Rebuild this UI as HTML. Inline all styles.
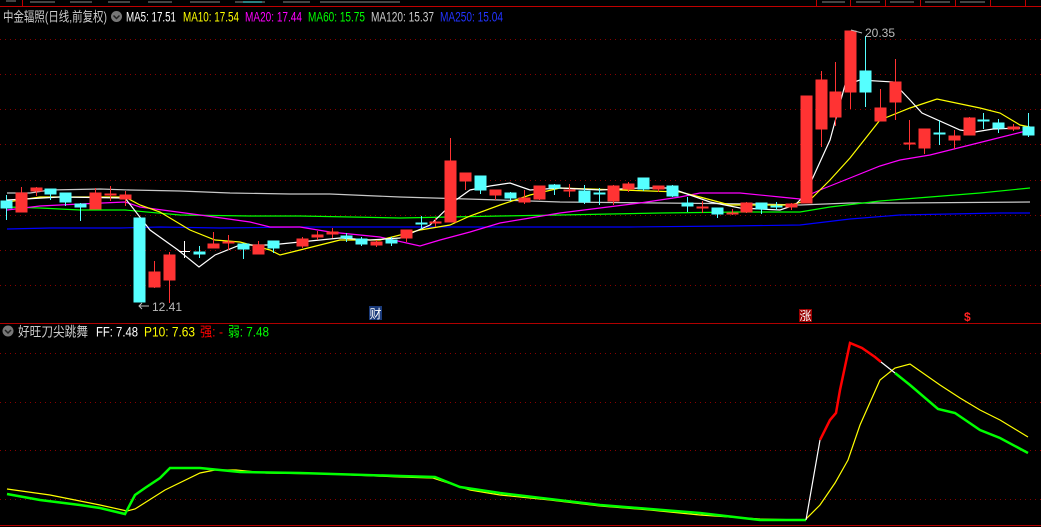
<!DOCTYPE html>
<html><head><meta charset="utf-8"><style>
body{margin:0;background:#000;width:1041px;height:527px;overflow:hidden;font-family:"Liberation Sans","Noto Sans CJK SC",sans-serif}
svg{display:block}
</style></head><body>
<svg width="1041" height="527" xmlns="http://www.w3.org/2000/svg" font-family="Liberation Sans, Noto Sans CJK SC, sans-serif">
<rect width="1041" height="527" fill="#000"/>
<line x1="0" y1="6.5" x2="1041" y2="6.5" stroke="#c00000"/>
<line x1="22.5" y1="0" x2="22.5" y2="6" stroke="#c00000"/>
<line x1="6" y1="1" x2="16" y2="1" stroke="#888"/>
<g stroke="#c00000"><line x1="816.5" y1="0" x2="816.5" y2="6"/><line x1="850.5" y1="0" x2="850.5" y2="6"/><line x1="885.5" y1="0" x2="885.5" y2="6"/><line x1="920.5" y1="0" x2="920.5" y2="6"/><line x1="955.5" y1="0" x2="955.5" y2="6"/><line x1="990.5" y1="0" x2="990.5" y2="6"/><line x1="1025.5" y1="0" x2="1025.5" y2="6"/></g>
<g stroke="#888" stroke-width="1"><line x1="30" y1="2" x2="55" y2="2"/><line x1="70" y1="2" x2="92" y2="2"/><line x1="108" y1="2" x2="130" y2="2"/><line x1="148" y1="2" x2="172" y2="2"/><line x1="190" y1="2" x2="220" y2="2"/><line x1="235" y1="2" x2="265" y2="2"/><line x1="283" y1="2" x2="310" y2="2"/><line x1="320" y1="2" x2="400" y2="2"/><line x1="822" y1="2" x2="845" y2="2"/><line x1="856" y1="2" x2="880" y2="2"/><line x1="890" y1="2" x2="914" y2="2"/><line x1="925" y1="2" x2="950" y2="2"/><line x1="960" y1="2" x2="985" y2="2"/></g>
<line x1="243" y1="2" x2="262" y2="2" stroke="#5ff"/>
<g stroke="#8a0000" stroke-dasharray="1,4">
<line x1="0" y1="39.5" x2="1041" y2="39.5"/><line x1="0" y1="74.5" x2="1041" y2="74.5"/><line x1="0" y1="109.5" x2="1041" y2="109.5"/><line x1="0" y1="144.5" x2="1041" y2="144.5"/><line x1="0" y1="180.5" x2="1041" y2="180.5"/><line x1="0" y1="215.5" x2="1041" y2="215.5"/><line x1="0" y1="250.5" x2="1041" y2="250.5"/><line x1="0" y1="285.5" x2="1041" y2="285.5"/>
<line x1="0" y1="353.5" x2="1041" y2="353.5"/><line x1="0" y1="402.5" x2="1041" y2="402.5"/><line x1="0" y1="450.5" x2="1041" y2="450.5"/><line x1="0" y1="499.5" x2="1041" y2="499.5"/>
</g>
<line x1="0" y1="323.5" x2="1041" y2="323.5" stroke="#b00000"/>
<line x1="0" y1="525.5" x2="1041" y2="525.5" stroke="#b00000"/>
<text x="3" y="21.5" font-size="13.5" fill="#ccc" textLength="104" lengthAdjust="spacingAndGlyphs">中金辐照(日线,前复权)</text>
<circle cx="116.5" cy="16.5" r="5.5" fill="#777"/><path d="M113.5 15.5 L116.5 18.5 L119.5 15.5" stroke="#222" stroke-width="1.5" fill="none"/>
<text x="126" y="21.5" font-size="13.5" fill="#fff" textLength="50" lengthAdjust="spacingAndGlyphs">MA5: 17.51</text>
<text x="183" y="21.5" font-size="13.5" fill="#ff0" textLength="56" lengthAdjust="spacingAndGlyphs">MA10: 17.54</text>
<text x="245" y="21.5" font-size="13.5" fill="#f0f" textLength="57" lengthAdjust="spacingAndGlyphs">MA20: 17.44</text>
<text x="308" y="21.5" font-size="13.5" fill="#0f0" textLength="57" lengthAdjust="spacingAndGlyphs">MA60: 15.75</text>
<text x="371" y="21.5" font-size="13.5" fill="#ccc" textLength="63" lengthAdjust="spacingAndGlyphs">MA120: 15.37</text>
<text x="440" y="21.5" font-size="13.5" fill="#2233ff" textLength="63" lengthAdjust="spacingAndGlyphs">MA250: 15.04</text>
<g fill="none" stroke-width="1.2">
<polyline stroke="#00f" points="7,229 50,228 120,228 160,227 220,228 300,227 400,227 500,227 630,227 730,226 800,225 850,219 900,215 1000,213 1030,213"/>
<polyline stroke="#c8c8c8" points="7,193 30,193 50,190 100,189 130,190 180,191 230,193 290,194 330,194 400,197 500,200 560,202 660,203 760,204 800,205 850,203 900,203 1030,202"/>
<polyline stroke="#0f0" points="7,207 40,208 80,210 125,210 180,215 250,216 300,216 400,218 500,216 560,215 660,213 740,212 800,212 830,207 880,201 930,197 980,193 1030,188"/>
<polyline stroke="#f0f" points="7,210 40,206 80,204 125,202 140,207 200,215 250,222 270,227 300,227 330,232 380,237 420,246 440,240 470,232 500,223 530,218 560,213 600,208 640,203 680,197 700,193 740,193 780,197 800,199 820,190 850,178 880,166 900,160 930,155 990,140 1030,130"/>
<polyline stroke="#ff0" points="7,202 40,197 125,197 140,205 160,212 190,230 215,240 240,242 270,250 280,255 300,250 340,240 380,240 420,230 450,225 470,216 500,205 530,195 560,188 620,190 680,192 700,197 730,205 790,205 810,200 830,180 850,158 880,120 910,108 937,99 980,108 1000,113 1020,125 1030,127"/>
<polyline stroke="#fff" points="7,200 60,197 125,198 150,230 178,250 199,267 215,255 240,245 270,245 300,242 340,238 370,240 400,238 430,225 456,200 470,190 490,186 510,183 530,190 560,188 600,190 640,188 670,188 690,195 710,202 740,208 780,210 795,205 805,195 830,140 845,85 860,80 893,82 910,100 922,113 960,130 975,132 993,129 1020,128"/>
</g>
<g fill="#ff3333" stroke="#ff3333">
<line x1="21.5" y1="187" x2="21.5" y2="212"/><rect x="16" y="193" width="11" height="19"/>
<line x1="36.5" y1="187" x2="36.5" y2="196"/><rect x="31" y="188" width="11" height="3"/>
<line x1="95.5" y1="188" x2="95.5" y2="209"/><rect x="90" y="193" width="11" height="16"/>
<line x1="110.5" y1="186" x2="110.5" y2="201"/><rect x="105" y="194" width="11" height="1"/>
<line x1="125.5" y1="191" x2="125.5" y2="206"/><rect x="120" y="195" width="11" height="4"/>
<line x1="154.5" y1="261" x2="154.5" y2="288"/><rect x="149" y="272" width="11" height="15"/>
<line x1="169.5" y1="252" x2="169.5" y2="303"/><rect x="164" y="255" width="11" height="25"/>
<line x1="213.5" y1="232" x2="213.5" y2="248"/><rect x="208" y="244" width="11" height="4"/>
<line x1="228.5" y1="235" x2="228.5" y2="250"/><rect x="223" y="242" width="11" height="1"/>
<line x1="258.5" y1="241" x2="258.5" y2="254"/><rect x="253" y="245" width="11" height="9"/>
<line x1="302.5" y1="237" x2="302.5" y2="248"/><rect x="297" y="239" width="11" height="7"/>
<line x1="317.5" y1="231" x2="317.5" y2="240"/><rect x="312" y="235" width="11" height="2"/>
<line x1="332.5" y1="228" x2="332.5" y2="238"/><rect x="327" y="232" width="11" height="2"/>
<line x1="376.5" y1="240" x2="376.5" y2="247"/><rect x="371" y="242" width="11" height="3"/>
<line x1="406.5" y1="230" x2="406.5" y2="242"/><rect x="401" y="230" width="11" height="8"/>
<line x1="435.5" y1="218" x2="435.5" y2="227"/><rect x="430" y="222" width="11" height="1"/>
<line x1="450.5" y1="138" x2="450.5" y2="222"/><rect x="445" y="161" width="11" height="61"/>
<line x1="465.5" y1="173" x2="465.5" y2="190"/><rect x="460" y="173" width="11" height="8"/>
<line x1="495.5" y1="190" x2="495.5" y2="200"/><rect x="490" y="190" width="11" height="5"/>
<line x1="524.5" y1="190" x2="524.5" y2="204"/><rect x="519" y="198" width="11" height="4"/>
<line x1="539.5" y1="186" x2="539.5" y2="200"/><rect x="534" y="186" width="11" height="13"/>
<line x1="569.5" y1="184" x2="569.5" y2="197"/><rect x="564" y="190" width="11" height="1"/>
<line x1="613.5" y1="185" x2="613.5" y2="205"/><rect x="608" y="186" width="11" height="15"/>
<line x1="628.5" y1="182" x2="628.5" y2="192"/><rect x="623" y="184" width="11" height="5"/>
<line x1="658.5" y1="186" x2="658.5" y2="192"/><rect x="653" y="186" width="11" height="3"/>
<line x1="702.5" y1="201" x2="702.5" y2="213"/><rect x="697" y="207" width="11" height="1"/>
<line x1="732.5" y1="209" x2="732.5" y2="215"/><rect x="727" y="213" width="11" height="1"/>
<line x1="746.5" y1="202" x2="746.5" y2="213"/><rect x="741" y="203" width="11" height="9"/>
<line x1="791.5" y1="203" x2="791.5" y2="210"/><rect x="786" y="204" width="11" height="3"/>
<rect x="801" y="96" width="11" height="107"/>
<line x1="821.5" y1="71" x2="821.5" y2="147"/><rect x="816" y="80" width="11" height="49"/>
<line x1="835.5" y1="62" x2="835.5" y2="126"/><rect x="830" y="92" width="11" height="25"/>
<line x1="850.5" y1="31" x2="850.5" y2="109"/><rect x="845" y="31" width="11" height="61"/>
<line x1="880.5" y1="89" x2="880.5" y2="121"/><rect x="875" y="108" width="11" height="13"/>
<line x1="895.5" y1="59" x2="895.5" y2="120"/><rect x="890" y="82" width="11" height="20"/>
<line x1="909.5" y1="120" x2="909.5" y2="150"/><rect x="904" y="143" width="11" height="1"/>
<line x1="924.5" y1="129" x2="924.5" y2="154"/><rect x="919" y="129" width="11" height="19"/>
<line x1="954.5" y1="130" x2="954.5" y2="149"/><rect x="949" y="136" width="11" height="4"/>
<line x1="969.5" y1="117" x2="969.5" y2="135"/><rect x="964" y="118" width="11" height="17"/>
<line x1="1013.5" y1="124" x2="1013.5" y2="131"/><rect x="1008" y="127" width="11" height="2"/>
</g>
<g fill="#55ffff" stroke="#55ffff">
<line x1="6.5" y1="195" x2="6.5" y2="220"/><rect x="1" y="201" width="11" height="7"/>
<line x1="50.5" y1="189" x2="50.5" y2="200"/><rect x="45" y="189" width="11" height="5"/>
<line x1="65.5" y1="193" x2="65.5" y2="206"/><rect x="60" y="193" width="11" height="9"/>
<line x1="80.5" y1="203" x2="80.5" y2="221"/><rect x="75" y="204" width="11" height="3"/>
<rect x="134" y="218" width="11" height="84"/>
<line x1="199.5" y1="246" x2="199.5" y2="258"/><rect x="194" y="252" width="11" height="2"/>
<line x1="243.5" y1="243" x2="243.5" y2="259"/><rect x="238" y="244" width="11" height="5"/>
<line x1="273.5" y1="241" x2="273.5" y2="253"/><rect x="268" y="241" width="11" height="7"/>
<line x1="346.5" y1="233" x2="346.5" y2="242"/><rect x="341" y="236" width="11" height="2"/>
<line x1="361.5" y1="237" x2="361.5" y2="246"/><rect x="356" y="239" width="11" height="5"/>
<line x1="391.5" y1="237" x2="391.5" y2="246"/><rect x="386" y="240" width="11" height="3"/>
<line x1="421.5" y1="216" x2="421.5" y2="229"/><rect x="416" y="223" width="11" height="1"/>
<line x1="480.5" y1="176" x2="480.5" y2="194"/><rect x="475" y="176" width="11" height="14"/>
<line x1="510.5" y1="192" x2="510.5" y2="201"/><rect x="505" y="193" width="11" height="5"/>
<line x1="554.5" y1="184" x2="554.5" y2="195"/><rect x="549" y="185" width="11" height="3"/>
<line x1="584.5" y1="185" x2="584.5" y2="204"/><rect x="579" y="191" width="11" height="11"/>
<line x1="599.5" y1="188" x2="599.5" y2="205"/><rect x="594" y="193" width="11" height="1"/>
<line x1="643.5" y1="178" x2="643.5" y2="191"/><rect x="638" y="178" width="11" height="11"/>
<line x1="672.5" y1="185" x2="672.5" y2="197"/><rect x="667" y="186" width="11" height="10"/>
<line x1="687.5" y1="197" x2="687.5" y2="212"/><rect x="682" y="203" width="11" height="3"/>
<line x1="717.5" y1="208" x2="717.5" y2="218"/><rect x="712" y="208" width="11" height="6"/>
<line x1="761.5" y1="203" x2="761.5" y2="214"/><rect x="756" y="203" width="11" height="6"/>
<line x1="776.5" y1="202" x2="776.5" y2="210"/><rect x="771" y="206" width="11" height="1"/>
<line x1="865.5" y1="36" x2="865.5" y2="107"/><rect x="860" y="71" width="11" height="21"/>
<line x1="939.5" y1="120" x2="939.5" y2="145"/><rect x="934" y="133" width="11" height="1"/>
<line x1="983.5" y1="113" x2="983.5" y2="129"/><rect x="978" y="120" width="11" height="1"/>
<line x1="998.5" y1="119" x2="998.5" y2="133"/><rect x="993" y="123" width="11" height="5"/>
<line x1="1028.5" y1="113" x2="1028.5" y2="137"/><rect x="1023" y="127" width="11" height="8"/>
</g>
<g stroke="#fff"><line x1="184.5" y1="241" x2="184.5" y2="258"/><line x1="179" y1="251.5" x2="190" y2="251.5"/></g>
<text x="152" y="311" font-size="12" fill="#bbb">12.41</text>
<path d="M139 306 L149 306 M142 303 L139 306 L142 309" stroke="#bbb" fill="none"/>
<text x="865" y="37" font-size="12" fill="#bbb">20.35</text>
<path d="M851 30 L862 33" stroke="#bbb"/>
<rect x="369" y="306" width="13" height="14" fill="#1a3a7a"/><text x="369.5" y="318" font-size="12" fill="#fff">财</text>
<rect x="799" y="309" width="13" height="13" fill="#900"/><text x="799.5" y="320" font-size="12" fill="#fff">涨</text>
<text x="964" y="321" font-size="12" fill="#f22" font-weight="bold">$</text>
<circle cx="8" cy="331" r="5.5" fill="#777"/><path d="M5 330 L8 333 L11 330" stroke="#222" stroke-width="1.5" fill="none"/>
<text x="18" y="336.5" font-size="13.5" fill="#ccc" textLength="70" lengthAdjust="spacingAndGlyphs">好旺刀尖跳舞</text>
<text x="96" y="336.5" font-size="13.5" fill="#fff" textLength="42" lengthAdjust="spacingAndGlyphs">FF: 7.48</text>
<text x="144" y="336.5" font-size="13.5" fill="#ff0" textLength="51" lengthAdjust="spacingAndGlyphs">P10: 7.63</text>
<text x="200" y="336.5" font-size="13.5" fill="#f00" textLength="23" lengthAdjust="spacingAndGlyphs">强: -</text>
<text x="228" y="336.5" font-size="13.5" fill="#0f0" textLength="41" lengthAdjust="spacingAndGlyphs">弱: 7.48</text>
<g fill="none">
<polyline stroke="#ff0" stroke-width="1.2" points="7,489 50,495 100,505 127,511 135,509 165,490 200,473 215,470 236,470 266,473 330,474 400,477 433,478 470,490 500,495 550,500 600,506 650,510 700,515 760,519 805,520 820,505 835,483 848,460 860,425 880,380 895,368 910,364 940,385 960,398 980,410 1000,420 1028,437"/>
<polyline stroke="#0f0" stroke-width="2.5" points="7,494 40,500 80,505 100,508 125,514 135,495 145,488 160,478 170,468 200,468 240,472 300,473 400,476 435,477 460,487 500,493 600,505 700,513 760,520 806,520"/>
<polyline stroke="#fff" stroke-width="1.2" points="806,520 820,440"/>
<polyline stroke="#f00" stroke-width="2.5" points="820,440 830,420 836,413 840,390 850,343 862,348 875,357 881,362"/>
<polyline stroke="#fff" stroke-width="1.2" points="881,362 895,373"/>
<polyline stroke="#0f0" stroke-width="2.5" points="895,373 910,385 938,409 955,413 980,430 1000,438 1028,453"/>
</g>
</svg>
</body></html>
